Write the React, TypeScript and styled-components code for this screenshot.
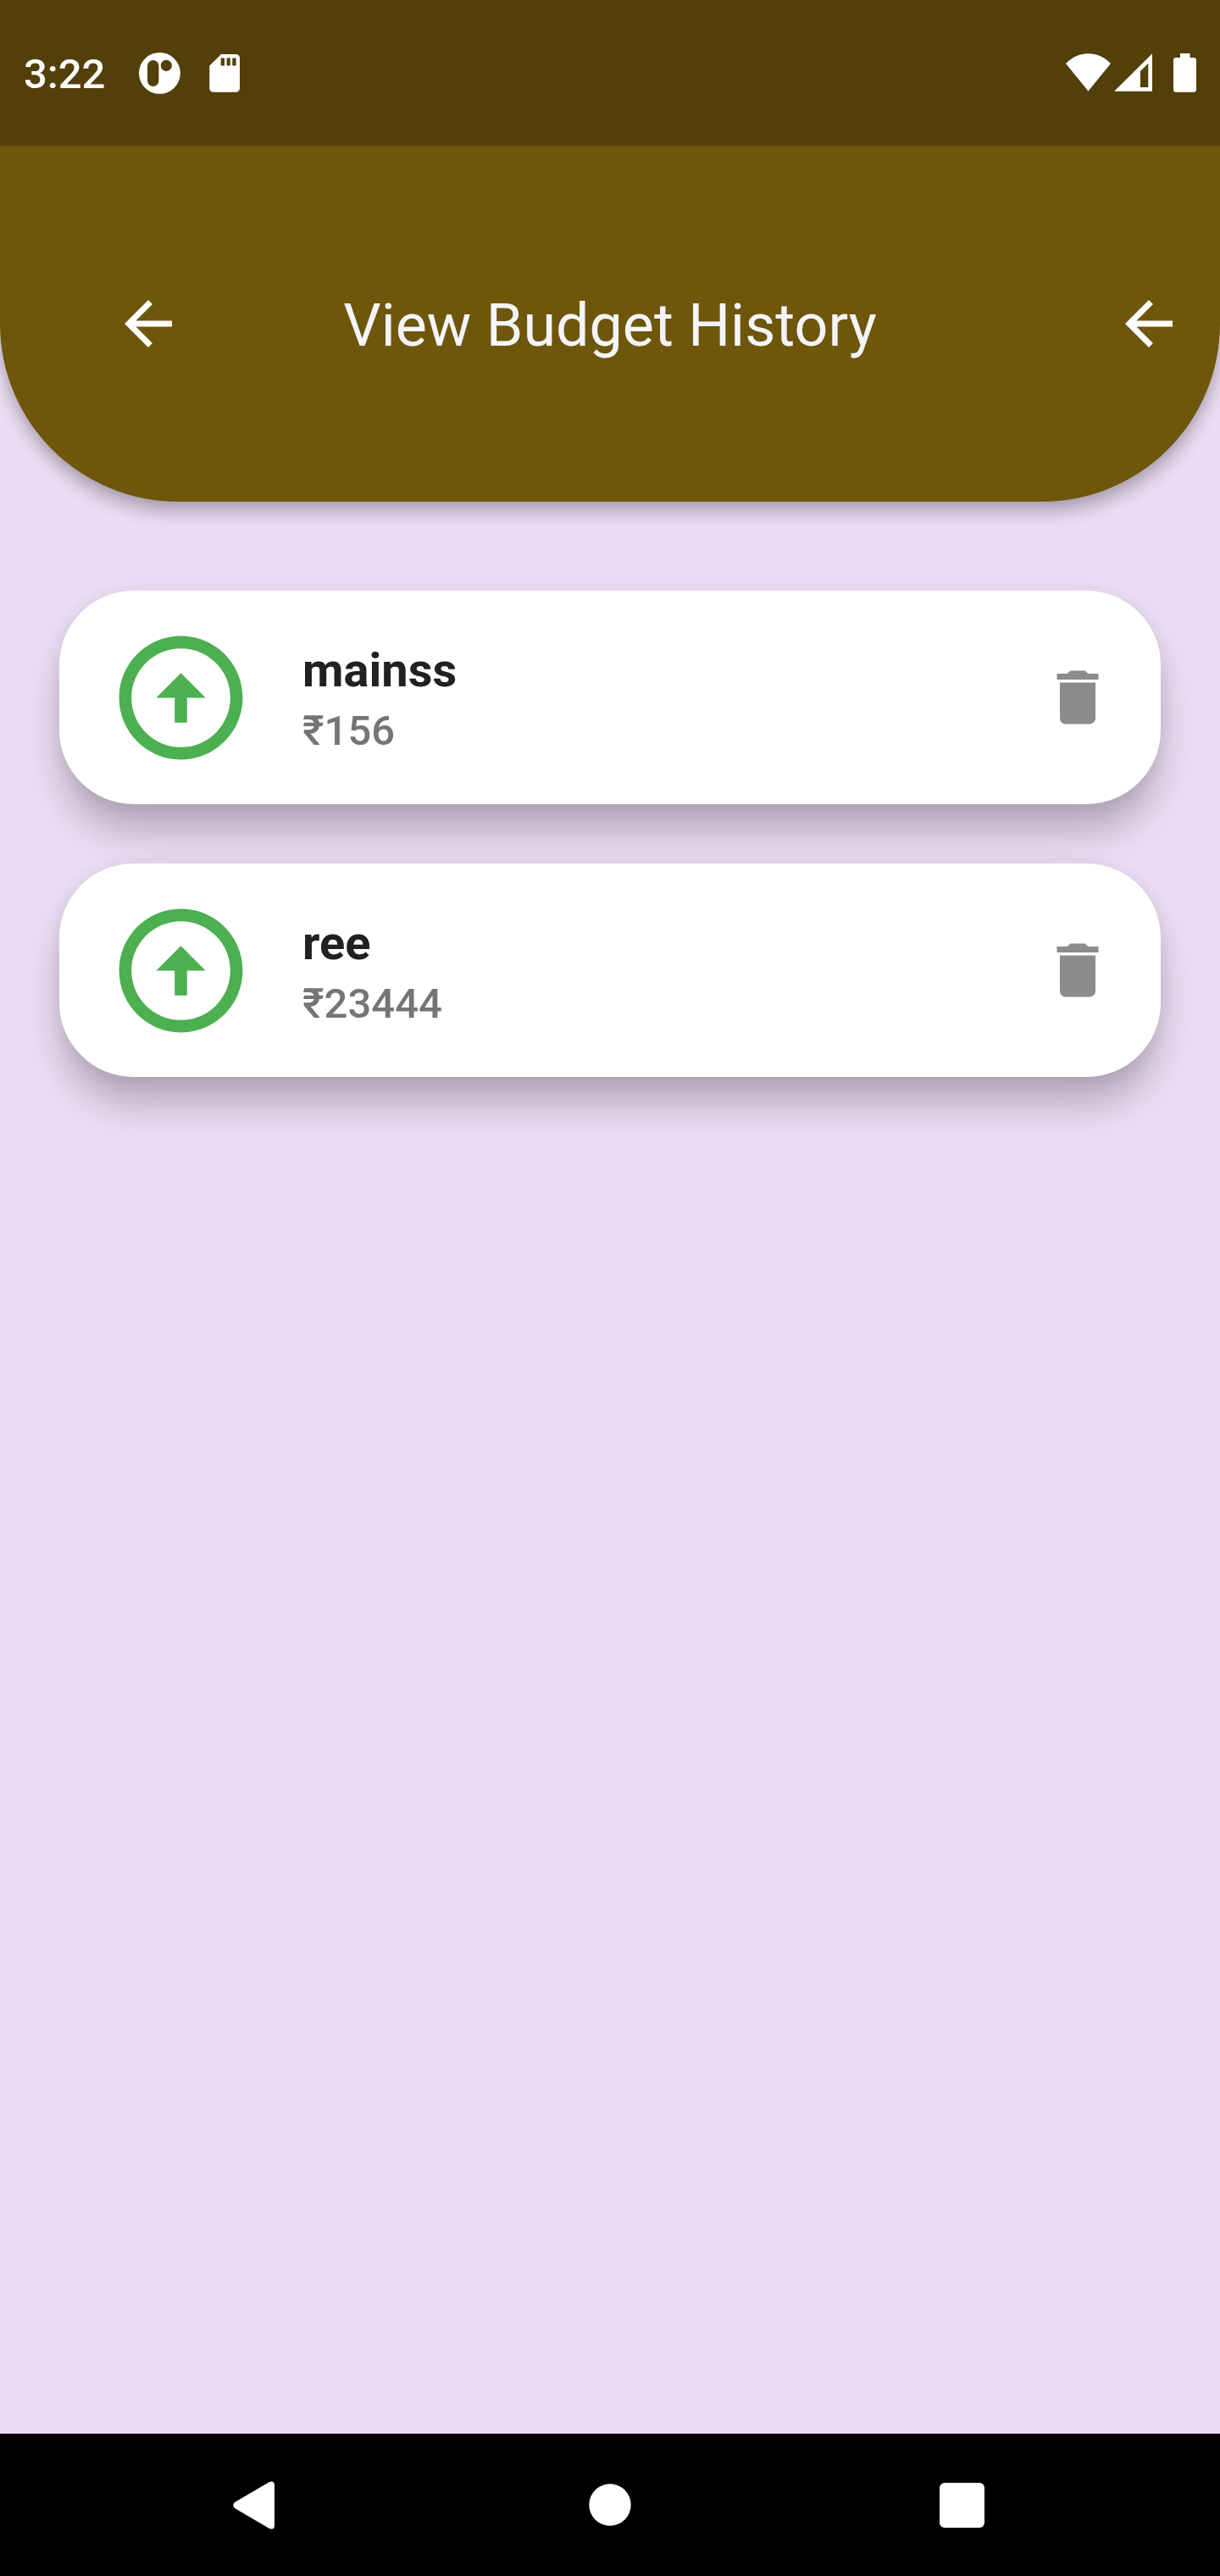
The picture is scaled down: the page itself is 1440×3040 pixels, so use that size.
import React from "react";
import styled, { createGlobalStyle } from "styled-components";

const GlobalStyle = createGlobalStyle`
  * { box-sizing: border-box; }
  body { margin: 0; background: #ebddf3; font-family: Roboto, "Noto Sans", sans-serif; }
  svg { display: block; flex: none; }
`;

const Screen = styled.main`
  display: flex;
  flex-direction: column;
  width: 1440px;
  height: 3040px;
  overflow: hidden;
  background: #ebddf3;
`;

const Header = styled.header`
  flex: none;
  height: 592px;
  overflow: hidden;
  background: #6e560b;
  border-radius: 0 0 210px 210px;
  box-shadow: 0 14px 20px -1px rgba(0, 0, 0, 0.25), 0 0 10px 2px rgba(0, 0, 0, 0.05);
`;

const StatusBar = styled.div`
  display: flex;
  align-items: center;
  justify-content: space-between;
  height: 172px;
  padding: 0 28px;
  background: #533f09;
  color: #fff;
`;

const StatusGroup = styled.div`
  display: flex;
  align-items: center;
`;

const Clock = styled.time`
  width: 136px;
  padding-top: 4px;
  font-size: 49px;
  line-height: 58px;
  font-weight: 500;
`;

const Toolbar = styled.div`
  display: grid;
  grid-template-columns: 1fr auto 1fr;
  align-items: center;
  height: 420px;
  padding: 0 42px;
`;

const IconButton = styled.button<{ $inset?: number; $end?: boolean }>`
  display: flex;
  justify-self: ${({ $end }) => ($end ? "end" : "start")};
  margin-left: ${({ $inset = 0 }) => $inset}px;
  padding: 0;
  border: 0;
  background: none;
  color: #fff;
`;

const Title = styled.h1`
  margin: 0;
  padding-top: 4px;
  color: #f4f4fb;
  font-size: 70px;
  line-height: 82px;
  font-weight: 400;
  white-space: nowrap;
`;

const BudgetList = styled.ul`
  flex: 1;
  display: flex;
  flex-direction: column;
  gap: 70px;
  margin: 0;
  padding: 105px 70px 0;
  list-style: none;
`;

const BudgetCard = styled.li`
  display: flex;
  align-items: center;
  gap: 56px;
  height: 252px;
  padding: 0 56px;
  border-radius: 87.5px;
  background: #fff;
  box-shadow: 0 35px 46px -5px rgba(0, 0, 0, 0.25), 0 0 20px 3px rgba(0, 0, 0, 0.05);
`;

const Details = styled.div`
  flex: 1;
  padding-top: 3px;
`;

const Name = styled.div`
  color: #212121;
  font-size: 56px;
  line-height: 66px;
  font-weight: 700;
`;

const Amount = styled.div`
  margin-top: 10px;
  color: #757575;
  font-size: 49px;
  line-height: 58px;
  font-weight: 500;
`;

const NavBar = styled.nav`
  flex: none;
  display: grid;
  grid-template-columns: 600px 240px 590px;
  align-items: center;
  justify-items: center;
  height: 168px;
  background: #000;
  color: #fff;
`;

type IconProps = { d: string; size: number; color?: string };

const MaterialIcon = ({ d, size, color = "currentColor" }: IconProps) => (
  <svg width={size} height={size} viewBox="0 0 24 24" fill={color}>
    <path d={d} />
  </svg>
);

const BACK = "M20 11H7.83l5.59-5.59L12 4l-8 8 8 8 1.41-1.41L7.83 13H20v-2z";
const UP =
  "M12 20c-4.41 0-8-3.59-8-8s3.59-8 8-8 8 3.59 8 8-3.59 8-8 8m0 2c5.52 0 10-4.48 10-10S17.52 2 12 2 2 6.48 2 12s4.48 10 10 10zm-1-10v4h2v-4h3l-4-4-4 4h3z";
const TRASH =
  "M6 19c0 1.1.9 2 2 2h8c1.1 0 2-.9 2-2V7H6v12zM19 4h-3.5l-1-1h-5l-1 1H5v2h14V4z";

const NotificationIcons = () => (
  <svg width="120" height="49" viewBox="164 62 120 49" fill="currentColor">
    <path
      fillRule="evenodd"
      d="M188.4 62a24.4 24.4 0 1 0 0 48.8a24.4 24.4 0 1 0 0-48.8zM180.7 71a6.7 6.7 0 0 1 6.7 6.7v17.6a6.7 6.7 0 0 1-13.4 0V77.7a6.7 6.7 0 0 1 6.7-6.7zM196.3 70.8a6.6 6.6 0 1 1 0 13.2a6.6 6.6 0 1 1 0-13.2z"
    />
    <path
      fillRule="evenodd"
      d="M261 64h17.5a4.5 4.5 0 0 1 4.5 4.5v35.7a4.5 4.5 0 0 1-4.5 4.5h-26.7a4.5 4.5 0 0 1-4.5-4.5V77.5zM260.7 68.5v9h4.3v-9zM267.6 68.5v9h4.2v-9zM274.3 68.5v9h4.3v-9z"
    />
  </svg>
);

const SystemIcons = () => (
  <svg width="154" height="46" viewBox="1258 63 154 46" fill="currentColor">
    <path d="M1258 75C1265 67.5 1274.5 63.2 1284.5 63.2S1304 67.5 1311 75L1284.5 107.5z" />
    <path
      fillRule="evenodd"
      d="M1360 63.3V107.8H1315.2zM1355.3 74.7L1346 84V103H1355.3z"
    />
    <path d="M1393 63h11.5v5h4.5a3 3 0 0 1 3 3v34.8a3 3 0 0 1-3 3h-21a3 3 0 0 1-3-3V71a3 3 0 0 1 3-3h5z" />
  </svg>
);

const budgets = [
  { name: "mainss", amount: "₹156" },
  { name: "ree", amount: "₹23444" },
];

export default function App() {
  return (
    <Screen>
      <GlobalStyle />
      <Header>
        <StatusBar>
          <StatusGroup>
            <Clock>3:22</Clock>
            <NotificationIcons />
          </StatusGroup>
          <SystemIcons />
        </StatusBar>
        <Toolbar>
          <IconButton aria-label="Back" $inset={91}>
            <MaterialIcon d={BACK} size={84} />
          </IconButton>
          <Title>View Budget History</Title>
          <IconButton aria-label="Return" $end>
            <MaterialIcon d={BACK} size={84} />
          </IconButton>
        </Toolbar>
      </Header>
      <BudgetList>
        {budgets.map((budget) => (
          <BudgetCard key={budget.name}>
            <MaterialIcon d={UP} size={175} color="#4caf50" />
            <Details>
              <Name>{budget.name}</Name>
              <Amount>{budget.amount}</Amount>
            </Details>
            <IconButton aria-label="Delete">
              <MaterialIcon d={TRASH} size={84} color="#8c8c8c" />
            </IconButton>
          </BudgetCard>
        ))}
      </BudgetList>
      <NavBar>
        <svg width="50" height="57" viewBox="0 0 50 57" fill="currentColor">
          <path d="M2 25L43 1Q49 -1 49 5V52Q49 58 43 56L2 32Q-1.5 28.5 2 25z" />
        </svg>
        <svg width="50" height="50" viewBox="0 0 50 50" fill="currentColor">
          <circle cx="25" cy="25" r="24.7" />
        </svg>
        <svg width="53" height="53" viewBox="0 0 53 53" fill="currentColor">
          <rect width="53" height="53" rx="6" />
        </svg>
      </NavBar>
    </Screen>
  );
}
